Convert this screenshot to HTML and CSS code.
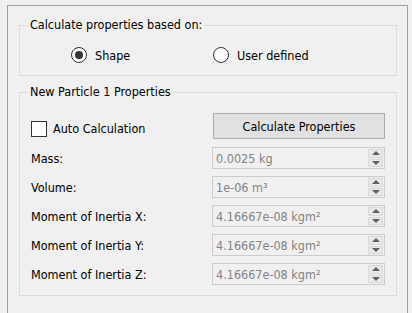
FILE: index.html
```html
<!DOCTYPE html>
<html lang="en">
  <head>
    <meta charset="UTF-8" />
    <title>Particle Properties</title>
    <link rel="stylesheet" href="styles.css">
  </head>
  <body>
    <div class="panel">
      <fieldset class="group basis">
        <legend>Calculate properties based on:</legend>
        <div class="choices">
          <label class="radio"><span class="radio-mark checked"></span>Shape</label>
          <label class="radio"><span class="radio-mark"></span>User defined</label>
        </div>
      </fieldset>

      <fieldset class="group props">
        <legend>New Particle 1 Properties</legend>
        <div class="form">
          <label class="check"><span class="check-box"></span>Auto Calculation</label>
          <button class="calc">Calculate Properties</button>

          <span class="field-label">Mass:</span>
          <div class="spin">
            <span class="spin-value">0.0025 kg</span>
            <span class="spin-buttons"><span class="spin-up"></span><span class="spin-down"></span></span>
          </div>

          <span class="field-label">Volume:</span>
          <div class="spin">
            <span class="spin-value">1e-06 m³</span>
            <span class="spin-buttons"><span class="spin-up"></span><span class="spin-down"></span></span>
          </div>

          <span class="field-label">Moment of Inertia X:</span>
          <div class="spin">
            <span class="spin-value">4.16667e-08 kgm²</span>
            <span class="spin-buttons"><span class="spin-up"></span><span class="spin-down"></span></span>
          </div>

          <span class="field-label">Moment of Inertia Y:</span>
          <div class="spin">
            <span class="spin-value">4.16667e-08 kgm²</span>
            <span class="spin-buttons"><span class="spin-up"></span><span class="spin-down"></span></span>
          </div>

          <span class="field-label">Moment of Inertia Z:</span>
          <div class="spin">
            <span class="spin-value">4.16667e-08 kgm²</span>
            <span class="spin-buttons"><span class="spin-up"></span><span class="spin-down"></span></span>
          </div>
        </div>
      </fieldset>
    </div>
  </body>
</html>
```

FILE: styles.css
```css
body {
  margin: 0;
  background-color: #f0f0f0;
  font-family: "DejaVu Sans Condensed", "DejaVu Sans", sans-serif;
  font-size: 12.5px;
  color: #000;
}
.panel {
  box-sizing: border-box;
  width: 401px;
  margin: 5px 0 0 7px;
  padding: 11px 10px 17px 11px;
  border: 1px solid #a0a0a0;
  border-bottom: 0;
}
.group {
  margin: 0;
  padding: 0 11px;
  min-width: 0;
  border: 1px solid #dcdcdc;
}
.group legend {
  margin-left: -3px;
  padding: 0 2px;
  line-height: 16px;
}
.basis {
  padding-top: 14px;
  padding-bottom: 12px;
}
.choices {
  display: grid;
  grid-template-columns: 142px auto;
  padding-left: 40px;
}
.radio {
  display: flex;
  align-items: center;
  height: 16px;
}
.radio-mark {
  box-sizing: border-box;
  width: 16px;
  height: 16px;
  margin-right: 8px;
  border: 1px solid #333;
  border-radius: 50%;
  background-color: #fff;
  display: flex;
  align-items: center;
  justify-content: center;
}
.radio-mark.checked::after {
  content: "";
  width: 8px;
  height: 8px;
  border-radius: 50%;
  background-color: #333;
}
.props {
  margin-top: 8px;
  padding-top: 13px;
  padding-bottom: 10px;
}
.form {
  display: grid;
  grid-template-columns: 1fr 173px;
  grid-template-rows: 27px;
  grid-auto-rows: 22px;
  row-gap: 7px;
  align-items: center;
}
.check {
  grid-row: 1;
  grid-column: 1;
  display: flex;
  align-items: center;
  align-self: stretch;
  margin-bottom: -4px;
}
.check-box {
  box-sizing: border-box;
  width: 16px;
  height: 16px;
  margin-right: 6px;
  border: 1px solid #333;
  background-color: #fff;
}
.calc {
  grid-row: 1;
  grid-column: 2;
  box-sizing: border-box;
  width: 172px;
  height: 26px;
  margin: 0 0 1px 1px;
  align-self: start;
  border: 1px solid #adadad;
  background-color: #e1e1e1;
  font: inherit;
  color: #000;
  padding: 0;
}
.spin {
  box-sizing: border-box;
  height: 22px;
  display: flex;
  align-items: center;
  justify-content: space-between;
  border: 1px solid #cccccc;
  padding: 1px 1px 1px 3px;
}
.spin-value {
  color: #838383;
}
.spin-buttons {
  display: flex;
  flex-direction: column;
  gap: 1px;
  width: 15px;
  height: 18px;
}
.spin-up,
.spin-down {
  flex: 1;
  box-sizing: border-box;
  border: 1px solid #dadada;
  background-color: #e8e8e8;
  display: flex;
  align-items: center;
  justify-content: center;
}
.spin-up::after {
  content: "";
  border-left: 4px solid transparent;
  border-right: 4px solid transparent;
  border-bottom: 4px solid #606060;
}
.spin-down::after {
  content: "";
  border-left: 4px solid transparent;
  border-right: 4px solid transparent;
  border-top: 4px solid #606060;
}
```
